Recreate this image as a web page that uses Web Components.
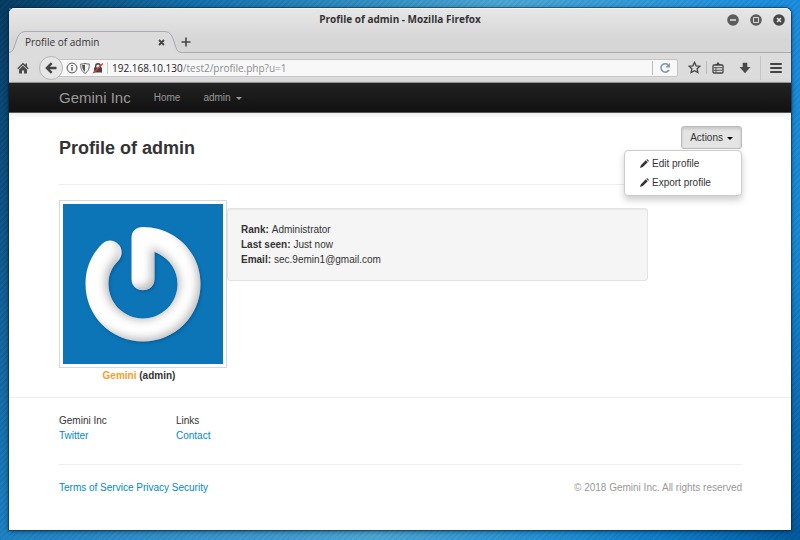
<!DOCTYPE html>
<html lang="en">
<head>
<meta charset="utf-8">
<title>Profile of admin</title>
<style>
html, body { height: 100%; }
body { margin: 0; font-family: "Liberation Sans", Arial, sans-serif; font-size: 10px; line-height: 15px; color: #333; }
</style>
</head>
<body>
<desk-top>
  <browser-window heading="Profile of admin - Mozilla Firefox">
    <tab-strip slot="chrome" label="Profile of admin"></tab-strip>
    <address-bar slot="chrome" host="192.168.10.130" path="/test2/profile.php?u=1"></address-bar>
    <site-nav brand="Gemini Inc"></site-nav>
    <profile-page>
      <span slot="title">Profile of admin</span>
      <actions-menu slot="actions"></actions-menu>
      <user-avatar slot="avatar" name="Gemini" login="admin"></user-avatar>
      <user-facts slot="facts"></user-facts>
    </profile-page>
    <site-footer></site-footer>
  </browser-window>
</desk-top>
<script>
function element(name, html, setup) {
  const template = document.createElement('template');
  template.innerHTML = html;
  customElements.define(name, class extends HTMLElement {
    constructor() {
      super();
      this.attachShadow({ mode: 'open' }).append(template.content.cloneNode(true));
    }
    connectedCallback() {
      this.shadowRoot.querySelectorAll('[data-attr]').forEach(node => {
        node.textContent = this.getAttribute(node.dataset.attr);
      });
      if (setup) setup(this.shadowRoot, this);
    }
  });
}

element('desk-top', `
<style>
:host { display: flex; box-sizing: border-box; min-height: 100%; padding: 8px 9px 10px;
  background:
    repeating-linear-gradient(135deg, #0028500c 0 2px, #ffffff06 2px 4px),
    linear-gradient(90deg, #043a60, #1370ac 25%, #4aa5d2 63%, #1e8fdb 92%, #1a8cdc) top / 100% 8px no-repeat,
    linear-gradient(90deg, #1b7fc2, #4aa5d2 47%, #2290d4 67%, #0a7cc8 83%, #00589c) bottom / 100% 10px no-repeat,
    linear-gradient(180deg, #043a60, #0d5287 40%, #1b7fc2) left / 9px 100% no-repeat,
    linear-gradient(180deg, #1a8cdc, #1688d4 45%, #00589c) right / 9px 100% no-repeat,
    #1b7fc2; }
</style>
<slot></slot>`);

element('browser-window', `
<style>
:host { display: flex; flex-direction: column; flex: 1; min-width: 0; background: #fff; border-radius: 6px 6px 0 0;
  box-shadow: 0 0 0 1px #00203c66, 0 1px 5px #001428aa; }
.chrome { border-radius: 6px 6px 0 0; background: linear-gradient(#e7e7e7, #d6d6d6 32px); box-shadow: inset 0 1px #f3f3f3; }
header { display: grid; grid-template-columns: 1fr auto 1fr; align-items: center; height: 23px;
  font: bold 10px/23px "Open Sans", "Noto Sans", sans-serif; color: #333; }
.buttons { grid-column: 3; justify-self: end; display: flex; gap: 11px; padding-right: 6px; }
header span { grid-column: 2; }
button { display: block; width: 12px; height: 12px; padding: 0; border: 0; background: none; }
svg { display: block; width: 12px; height: 12px; }
</style>
<div class="chrome">
  <header>
    <span data-attr="heading"></span>
    <div class="buttons">
      <button aria-label="Minimize"><svg viewBox="0 0 12 12"><circle cx="6" cy="6" r="5.8" fill="#5c5c5c"/><path d="M3 6h6" stroke="#eee" stroke-width="1.4"/></svg></button>
      <button aria-label="Maximize"><svg viewBox="0 0 12 12"><circle cx="6" cy="6" r="5.8" fill="#5c5c5c"/><path d="M3.5 3.5h5v5h-5z" fill="none" stroke="#ddd"/></svg></button>
      <button aria-label="Close"><svg viewBox="0 0 12 12"><circle cx="6" cy="6" r="5.8" fill="#484848"/><path d="M4 4l4 4M8 4l-4 4" stroke="#eee" stroke-width="1.4"/></svg></button>
    </div>
  </header>
  <slot name="chrome"></slot>
</div>
<slot></slot>`);

element('tab-strip', `
<style>
:host { display: flex; height: 22px; box-sizing: border-box; border-bottom: 1px solid #acacac;
  font: 10px/21px "Open Sans", "Noto Sans", sans-serif; color: #333; }
.tab { display: flex; height: 22px; }
.edge { display: block; width: 16px; height: 22px; }
.body { display: flex; align-items: center; justify-content: space-between; width: 140px; box-sizing: border-box;
  border-top: 1px solid #a9adb3; background: #dcdcdc; }
button { display: flex; align-items: center; padding: 0; border: 0; background: none; }
</style>
<div class="tab">
  <svg class="edge" viewBox="0 0 16 22"><path d="M0 21.5C8 21.5 5 .5 16 .5V22H0z" fill="#dcdcdc"/><path d="M0 21.5C8 21.5 5 .5 16 .5" fill="none" stroke="#a4a9b0"/></svg>
  <div class="body"><span data-attr="label"></span>
    <button aria-label="Close tab"><svg width="7" height="7" viewBox="0 0 7 7"><path d="M1 1l5 5M6 1L1 6" stroke="#444" stroke-width="1.8"/></svg></button></div>
  <svg class="edge" viewBox="0 0 16 22"><path d="M0 .5C11 .5 8 21.5 16 21.5V22H0z" fill="#dcdcdc"/><path d="M0 .5C11 .5 8 21.5 16 21.5" fill="none" stroke="#a4a9b0"/></svg>
</div>
<button aria-label="New tab"><svg width="10" height="10" viewBox="0 0 10 10"><path d="M5 .5v9M.5 5h9" stroke="#484848" stroke-width="1.6"/></svg></button>`);

element('address-bar', `
<style>
:host { display: flex; align-items: center; height: 30px; box-sizing: border-box; padding: 0 9px 0 8px;
  background: #dcdcdc; border-bottom: 1px solid #999; font: 10px/16px "Open Sans", "Noto Sans", sans-serif; }
button { display: flex; padding: 0; border: 0; background: none; }
svg { display: block; }
.back { position: relative; align-items: center; justify-content: center; width: 24px; height: 24px; box-sizing: border-box; margin-left: 10px;
  border: 1px solid #b5b5b5; border-radius: 50%; background: #e7e7e7; }
.field { display: flex; align-items: center; flex: 1; min-width: 0; height: 18px; box-sizing: border-box; margin-left: -12px;
  padding-left: 14px; background: #f8f8f8; border: 1px solid #c4c4c4; border-radius: 2px; }
.ids { display: flex; gap: 1px; padding-right: 3px; margin-right: 4px; border-right: 1px solid #ccc; }
label { color: #222; }
input { flex: 1; min-width: 0; padding: 0; border: 0; outline: 0; background: none; font: inherit; color: #8c8c8c; }
.reload { align-items: center; height: 14px; padding: 0 6px; border-left: 1px solid #bbb; }
.tools { display: flex; align-items: center; margin-left: 10px; }
.tools i { width: 1px; height: 13px; background: #bbb; margin: 0 5px; }
.tools i.tall { height: 24px; background: #c6c6c6; margin: 0 9px; }
.down { margin-left: 15px; }
</style>
<button aria-label="Home"><svg width="12" height="12" viewBox="0 0 12 12"><path d="M6 .8L.3 6.3l.9.9L6 2.7l4.8 4.5.9-.9L10 4.6V1.4H8.5v1.7zM2 7.4V11.500h3V8.500h2v3h3V7.400L6 3.700z" fill="#4a4a4a"/></svg></button>
<button class="back" aria-label="Back"><svg width="12" height="12" viewBox="0 0 12 12"><path d="M6.700 1.200L1.900 6l4.800 4.800M2.300 6H11.500" fill="none" stroke="#444" stroke-width="2.400"/></svg></button>
<div class="field">
  <span class="ids">
    <svg width="12" height="12" viewBox="0 0 12 12"><circle cx="6" cy="6" r="4.900" fill="none" stroke="#555"/><path d="M6 5.200v3.600M6 3v1.300" stroke="#444" stroke-width="1.300"/></svg>
    <svg width="12" height="12" viewBox="0 0 11 12"><path d="M5.500 1.200C4 2 3 2 1.200 2c0 4 .5 7.300 4.300 9.300C9.300 9.300 9.800 6 9.800 2 8 2 7 2 5.500 1.200z" fill="#f8f8f8" stroke="#666"/><path d="M5.500 2.500C4.500 3 3.700 3.100 2.600 3.100c.1 3 .6 5.200 2.900 6.800z" fill="#555"/></svg>
    <svg width="12" height="12" viewBox="0 0 12 12"><path d="M3.700 6V4a2.300 2.300 0 0 1 4.600 0v2" fill="none" stroke="#444" stroke-width="1.400"/><rect x="2" y="5.500" width="8" height="5" fill="#444"/><path d="M1.200 11L10.800 1.500" stroke="#e33b37" stroke-width="1.500"/></svg>
  </span>
  <label for="url" data-attr="host"></label><input id="url" type="text">
  <button class="reload" aria-label="Reload"><svg width="12" height="12" viewBox="0 0 10 10"><path d="M7.600 2.400A3.500 3.500 0 1 0 8.300 6.500" fill="none" stroke="#8297a6" stroke-width="1.300"/><path d="M9.100.8v3.800H5.300z" fill="#8297a6"/></svg></button>
</div>
<div class="tools">
  <button aria-label="Bookmark this page"><svg width="13" height="13" viewBox="0 0 13 13"><path d="M6.500 1.300l1.600 3.500 3.800.4-2.800 2.600.8 3.800-3.400-1.900-3.400 1.900.8-3.800L1.100 5.200l3.800-.4z" fill="none" stroke="#444" stroke-width="1.300"/></svg></button>
  <i></i>
  <button aria-label="Bookmarks"><svg width="12" height="12" viewBox="0 0 12 12"><rect x="1" y="3" width="10" height="8" rx="1" fill="none" stroke="#444" stroke-width="1.300"/><path d="M1.500 5.700h9M1.500 8.300h9M4 5v5.500" fill="none" stroke="#555"/><path d="M3.300 3V2L5 1.700V.5h2v1.200l1.700.3v1z" fill="#444"/></svg></button>
  <button class="down" aria-label="Downloads"><svg width="12" height="12" viewBox="0 0 12 12"><path d="M3.700.7h4.600V5h3.200L6 11.300.5 5h3.200z" fill="#4a4a4a"/></svg></button>
  <i class="tall"></i>
  <button aria-label="Menu"><svg width="12" height="12" viewBox="0 0 12 12"><path d="M1 2h10M1 6h10M1 10h10" stroke="#444" stroke-width="2" stroke-linecap="round"/></svg></button>
</div>`, (root, host) => { root.querySelector('input').value = host.getAttribute('path'); });

element('site-nav', `
<style>
:host { display: block; }
nav { display: flex; align-items: center; box-sizing: border-box; height: 30px; padding: 0 50px; background: linear-gradient(#222, #111);
  border-bottom: 1px solid #555; box-shadow: 0 1px 7px #0000001c; }
a { color: #999; text-decoration: none; }
.brand { font-size: 15px; margin-right: 23px; }
.home { margin-right: 23px; }
.caret { display: inline-block; margin-left: 5px; vertical-align: middle; border: 3px solid transparent; border-top-color: #999; border-bottom: 0; }
</style>
<nav><a class="brand" href="#" data-attr="brand"></a><a class="home" href="#">Home</a><a href="#">admin<span class="caret"></span></a></nav>`);

element('profile-page', `
<style>
:host { display: block; padding: 13px 49px 14px 50px; }
header { display: flex; align-items: flex-start; justify-content: space-between; height: 58px; border-bottom: 1px solid #eee; }
h1 { margin: 12px 0 0; font-size: 18px; line-height: 21px; }
.row { display: flex; align-items: flex-start; padding-top: 15px; }
</style>
<header><h1><slot name="title"></slot></h1><slot name="actions"></slot></header>
<div class="row"><slot name="avatar"></slot><slot name="facts"></slot></div>`);

element('actions-menu', `
<style>
:host { display: block; position: relative; }
.toggle { display: block; height: 23px; padding: 0 8px; border: 1px solid #bbb; border-radius: 3px; background: #e4e4e4;
  box-shadow: inset 0 2px 3px #00000022; font: inherit; color: #333; }
.caret { display: inline-block; margin-left: 4px; vertical-align: middle; border: 3px solid transparent; border-top-color: #000; border-bottom: 0; }
ul { position: absolute; top: 24px; right: 0; width: 118px; box-sizing: border-box; margin: 0; padding: 3px 0; list-style: none;
  border: 1px solid #ccc; border-radius: 4px; background: #fff; box-shadow: 0 4px 7px #00000033; }
a { display: flex; align-items: center; gap: 3px; padding-left: 15px; line-height: 19px; color: #333; text-decoration: none; }
</style>
<button class="toggle" aria-haspopup="true" aria-expanded="true">Actions<span class="caret"></span></button>
<ul>
  <li><a href="#"><svg width="9" height="9" viewBox="0 0 9 9"><path d="M0 9l.9-2.800L5.800 1.300l1.900 1.900-4.900 4.900zM6.300.8L7 .2C7.400-.1 9.100 1.500 8.800 2l-.6.700z" fill="#333"/></svg>Edit profile</a></li>
  <li><a href="#"><svg width="9" height="9" viewBox="0 0 9 9"><path d="M0 9l.9-2.800L5.800 1.300l1.900 1.900-4.900 4.900zM6.300.8L7 .2C7.400-.1 9.100 1.500 8.800 2l-.6.700z" fill="#333"/></svg>Export profile</a></li>
</ul>`);

element('user-avatar', `
<style>
:host { display: block; font-weight: bold; }
figure { margin: 0; }
svg { display: block; width: 160px; height: 160px; padding: 3px; border: 1px solid #d8d8d8; background: #fff; }
figcaption { width: 160px; text-align: center; }
.name { color: #f89d2c; }
</style>
<figure>
  <svg viewBox="0 0 160 160" role="img" aria-label="Avatar">
    <defs>
      <path id="mark" d="M80 23C112 23 137.500 48 137.500 80S112 137.500 80 137.500 22.500 112 22.500 80C22.500 63 29 50 39 40C49 30 65 43 56 56C49 63 45.500 70 45.500 80C45.500 99 61 114.500 80 114.500S114.500 99 114.500 80C114.500 65 105 53 91.500 48V75C91.500 90 68.500 90 68.500 75V34C68.500 27 73 23 80 23z"/>
      <clipPath id="clip"><use href="#mark"/></clipPath>
      <filter id="soft" x="-20%" y="-20%" width="140%" height="140%"><feGaussianBlur stdDeviation="4"/></filter>
      <filter id="drop"><feGaussianBlur stdDeviation="1.500"/></filter>
    </defs>
    <path d="M0 0h160v160H0z" fill="#0b75b8"/>
    <use href="#mark" transform="translate(1 1.500)" fill="#003d70" opacity=".45" filter="url(#drop)"/>
    <use href="#mark" fill="#fff"/>
    <g clip-path="url(#clip)">
      <path fill-rule="evenodd" filter="url(#soft)" transform="translate(-1 -1)" fill="#777" opacity=".5" d="M-20-20H180V180H-20zM78 15C108 15 135.500 46 135.500 78S112 135.500 80 135.500 14 112 14 80C14 63 24 46 36 34C49 24 61 43 54 54C47 60 43 70 43 80C43 101 61 117 80 117S118 99 118 80C118 65 105 50 89 44V75C89 86 60 88 60 75V30C60 20 70 15 78 15z"/></g>
  </svg>
  <figcaption><span class="name" data-attr="name"></span> (<span data-attr="login"></span>)</figcaption>
</figure>`);

element('user-facts', `
<style>
:host { display: block; flex: 0 1 421px; box-sizing: border-box; margin-top: 8px; padding: 13px; border: 1px solid #e3e3e3; border-radius: 3px;
  background: #f5f5f5; box-shadow: inset 0 1px 1px #0000000d; }
dl, dd { margin: 0; }
div { display: flex; gap: 3px; }
dt { font-weight: bold; }
</style>
<dl>
  <div><dt>Rank:</dt><dd>Administrator</dd></div>
  <div><dt>Last seen:</dt><dd>Just now</dd></div>
  <div><dt>Email:</dt><dd>sec.9emin1@gmail.com</dd></div>
</dl>`);

element('site-footer', `
<style>
:host { display: block; padding: 15px 49px 0 50px; border-top: 1px solid #eee; }
a { color: #08c; text-decoration: none; }
.columns { display: grid; grid-template-columns: 117px 1fr; padding-bottom: 21px; border-bottom: 1px solid #eee; }
.columns a { display: block; }
.legal { display: flex; justify-content: space-between; padding-top: 15px; color: #999; }
</style>
<div class="columns">
  <div>Gemini Inc<a href="#">Twitter</a></div>
  <div>Links<a href="#">Contact</a></div>
</div>
<div class="legal">
  <span><a href="#">Terms of Service</a> <a href="#">Privacy</a> <a href="#">Security</a></span>
  <span>© 2018 Gemini Inc. All rights reserved</span>
</div>`);
</script>
</body>
</html>
